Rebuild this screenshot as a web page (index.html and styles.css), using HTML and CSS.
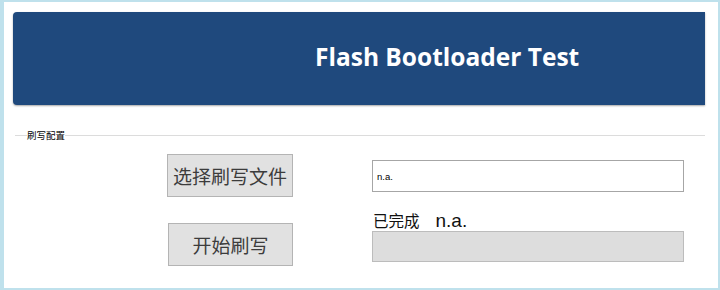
FILE: index.html
```html
<!DOCTYPE html>
<html lang="zh-CN">
<head>
<meta charset="utf-8">
<title>Flash Bootloader Test</title>
<link rel="stylesheet" href="styles.css">
</head>
<body>
<div class="frame">
  <div class="header"><span class="title">Flash Bootloader Test</span></div>
  <div class="group">
    <div class="group-title"><span>刷写配置</span></div>
    <div class="row row-one">
      <button class="btn btn-select">选择刷写文件</button>
      <div class="textbox">n.a.</div>
    </div>
    <div class="row row-two">
      <button class="btn btn-start">开始刷写</button>
      <div class="progress-col">
        <div class="status"><span class="status-label">已完成</span><span class="status-value">n.a.</span></div>
        <div class="progress"></div>
      </div>
    </div>
  </div>
</div>
</body>
</html>
```

FILE: styles.css
```css
html, body {
  margin: 0;
  padding: 0;
  background: #ffffff;
}

.frame {
  width: 720px;
  height: 290px;
  box-sizing: border-box;
  border-top: 2px solid #bfe1ec;
  border-right: 2px solid #bfe1ec;
  border-bottom: 2px solid #bfe1ec;
  border-left: 4px solid #bfe1ec;
  padding-top: 10px;
  padding-left: 9px;
  font-family: "Noto Sans CJK SC", "Liberation Sans", sans-serif;
}

.header {
  width: 692px;
  height: 93px;
  box-sizing: border-box;
  background: #1f497d;
  border-radius: 4px 0 0 4px;
  box-shadow: 0 1px 2px rgba(0, 0, 0, 0.35);
  display: flex;
  align-items: center;
  padding-left: 302px;
}

.title {
  color: #ffffff;
  font-family: "Open Sans", "Liberation Sans", sans-serif;
  font-weight: 700;
  font-size: 24.5px;
  letter-spacing: 0;
  margin-top: -5px;
}

.group {
  margin-top: 24px;
  margin-left: 2px;
  width: 690px;
}

.group-title {
  display: flex;
  align-items: center;
  height: 12px;
  font-size: 9.5px;
  color: #000000;
}

.group-title::before {
  content: "";
  width: 12px;
  height: 1px;
  background: #dcdcdc;
}

.group-title::after {
  content: "";
  flex: 1;
  height: 1px;
  background: #dcdcdc;
}

.group-title span {
  line-height: 12px;
}

.row {
  display: flex;
  margin-left: 152px;
}

.row-one {
  margin-top: 13px;
  align-items: center;
}

.row-two {
  margin-top: 26px;
}

.btn {
  box-sizing: border-box;
  height: 43px;
  padding: 0;
  margin: 0;
  background: #e1e1e1;
  border: 1px solid #b4b4b4;
  color: #3c3c3c;
  font-family: "Noto Sans CJK SC", "Liberation Sans", sans-serif;
  font-size: 19px;
  font-weight: 400;
  line-height: 1;
}

.btn-select {
  width: 126px;
}

.btn-start {
  width: 125px;
  margin-left: 1px;
}

.textbox {
  box-sizing: border-box;
  width: 312px;
  height: 32px;
  margin-left: 79px;
  border: 1px solid #a6a6a6;
  display: flex;
  align-items: center;
  padding-left: 4px;
  padding-top: 2px;
  font-family: "Liberation Sans", sans-serif;
  font-size: 9.5px;
  color: #000000;
}

.progress-col {
  margin-left: 79px;
  margin-top: -14px;
  width: 312px;
}

.status {
  display: flex;
  align-items: baseline;
  height: 22px;
  padding-left: 1px;
}

.status-label {
  font-size: 15.5px;
  color: #111111;
}

.status-value {
  margin-left: 16px;
  font-family: "Liberation Sans", sans-serif;
  font-size: 19px;
  color: #111111;
}

.progress {
  box-sizing: border-box;
  width: 312px;
  height: 31px;
  background: #dddddd;
  border: 1px solid #bcbcbc;
}
```
